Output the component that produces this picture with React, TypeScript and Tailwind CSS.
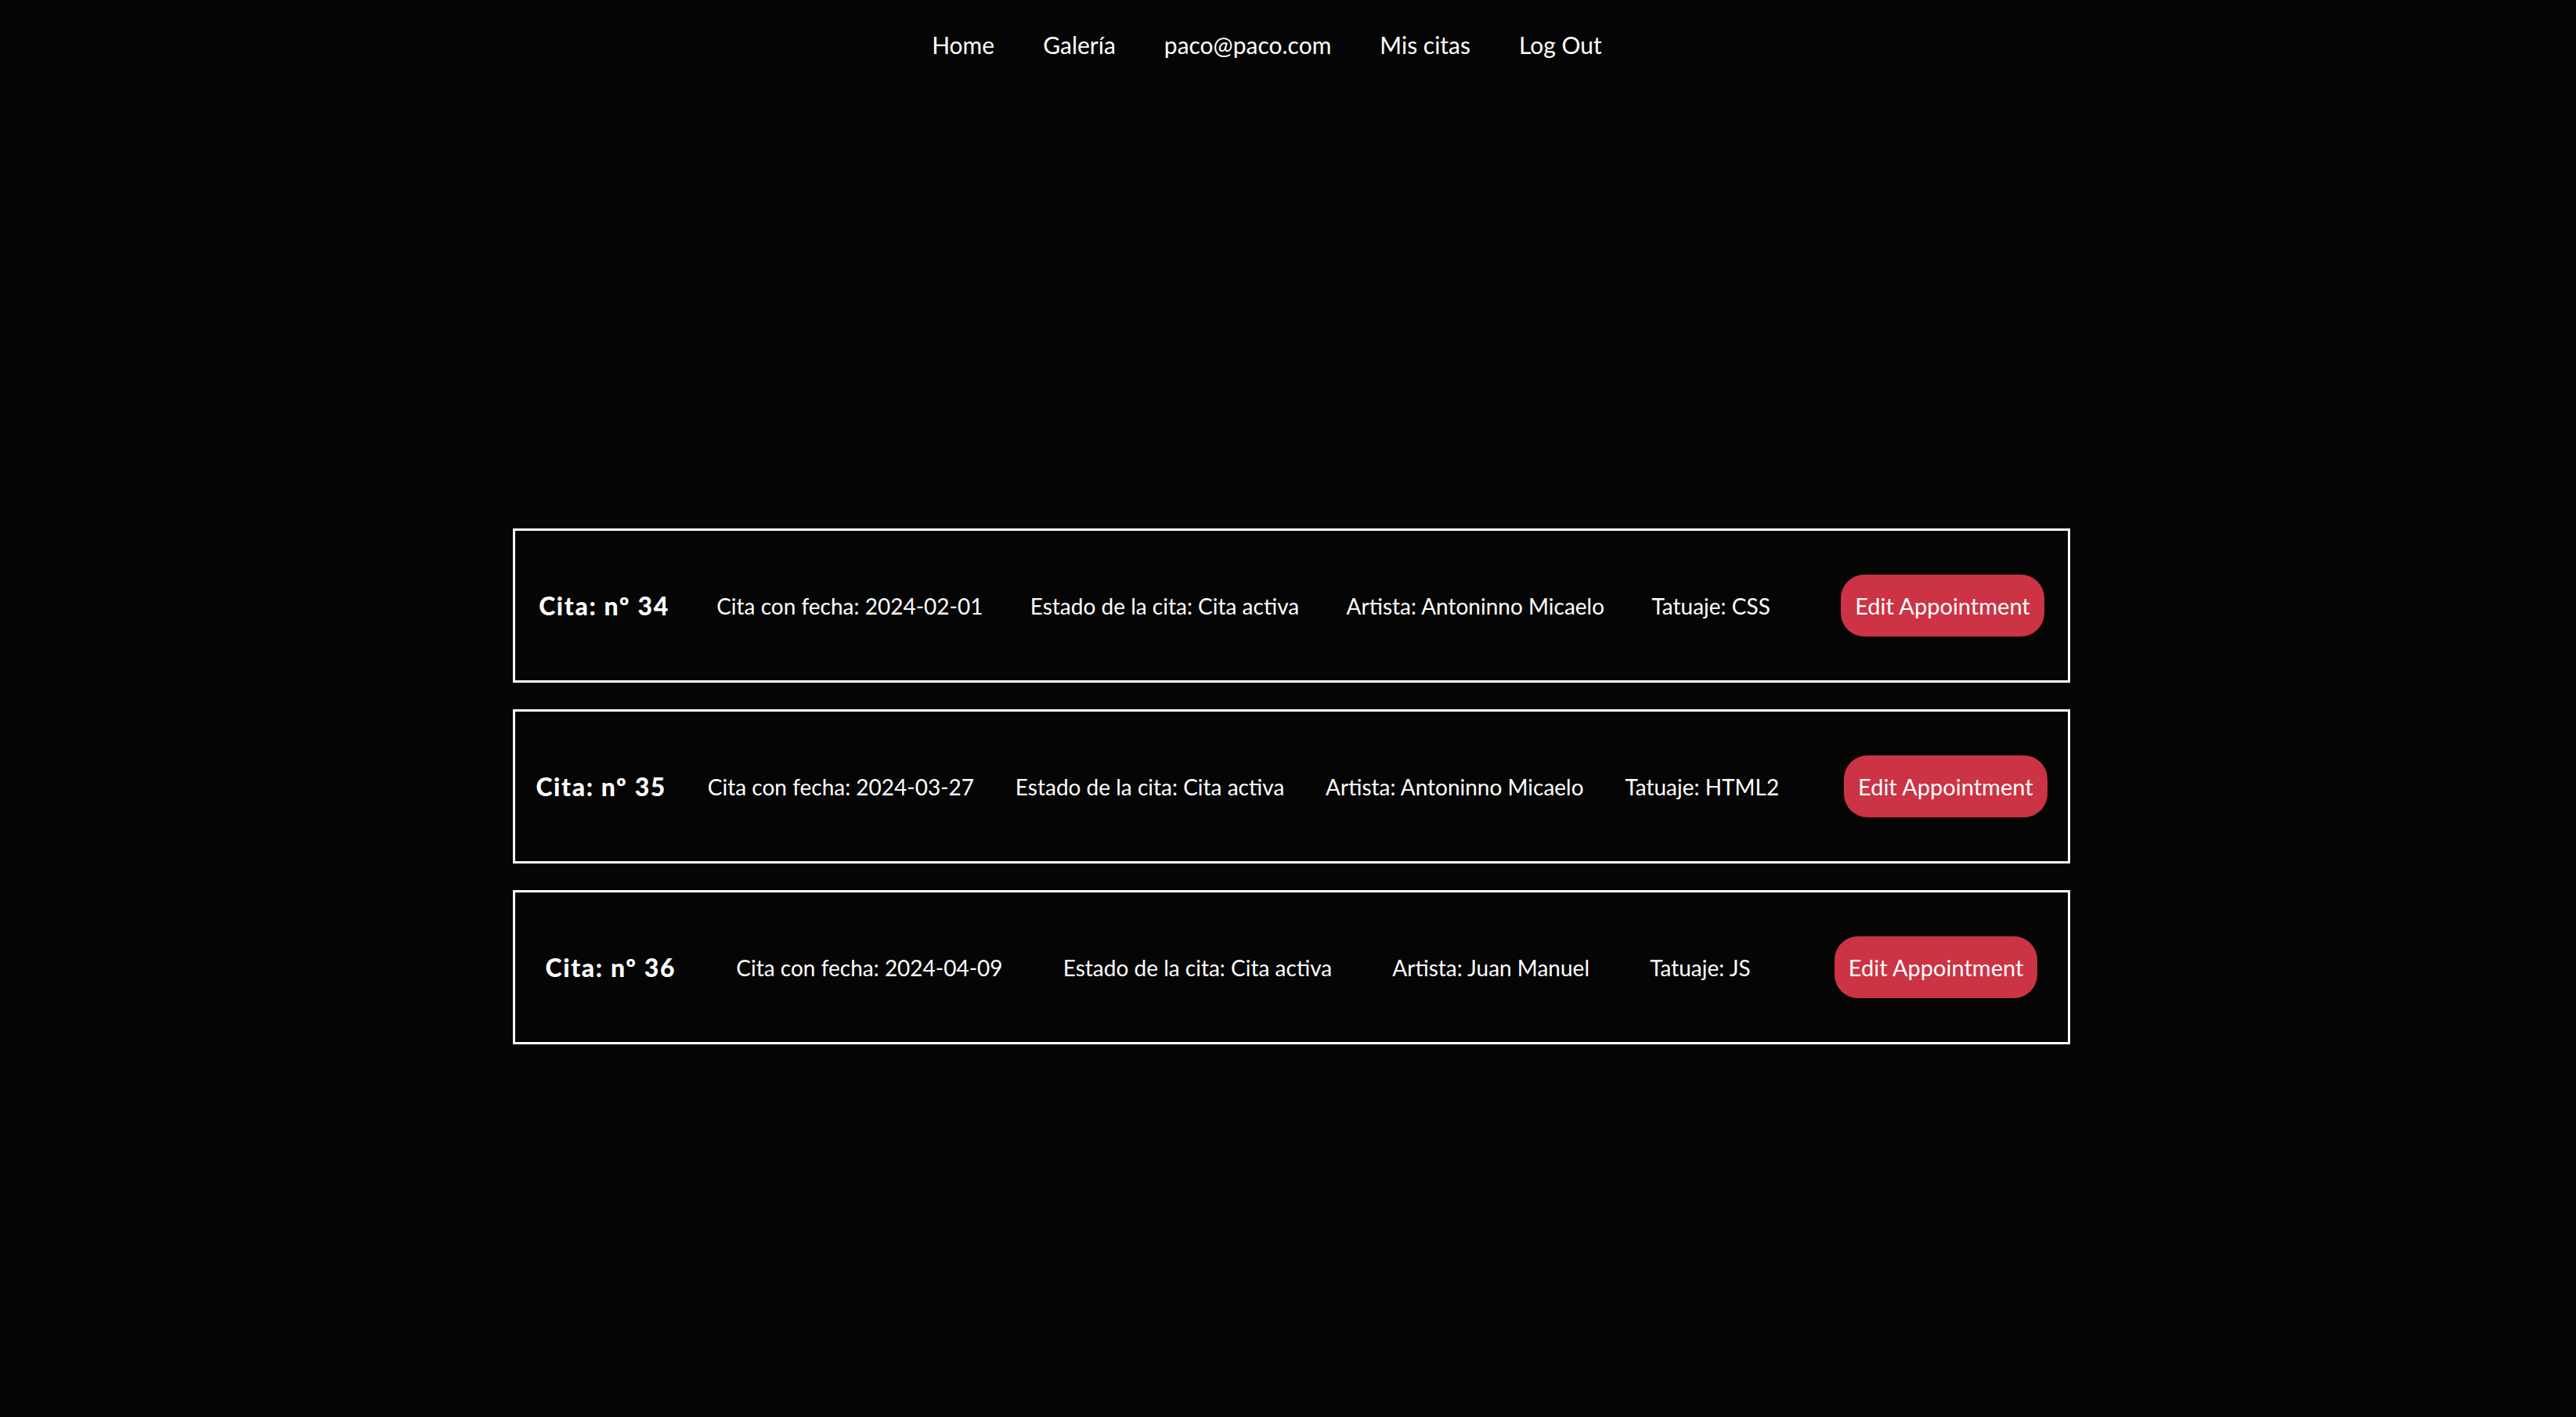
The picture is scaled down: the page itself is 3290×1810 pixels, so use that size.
const links = ["Home", "Galería", "paco@paco.com", "Mis citas", "Log Out"];

const citas = [
  { id: 34, fecha: "2024-02-01", estado: "Cita activa", artista: "Antoninno Micaelo", tatuaje: "CSS" },
  { id: 35, fecha: "2024-03-27", estado: "Cita activa", artista: "Antoninno Micaelo", tatuaje: "HTML2" },
  { id: 36, fecha: "2024-04-09", estado: "Cita activa", artista: "Juan Manuel", tatuaje: "JS" },
];

function Nav() {
  return (
    <nav className="flex justify-center pt-[36px] pb-[36px] pl-[8px]">
      {links.map((l) => (
        <a key={l} href="#" className="mr-[62px] text-[30px] leading-[42px] font-normal text-white">
          {l}
        </a>
      ))}
    </nav>
  );
}

function CitaCard({ cita }: { cita: (typeof citas)[number] }) {
  return (
    <div className="flex h-[197px] items-center justify-around border-[3px] border-white text-[28px] font-normal text-white">
      <span className="text-[32px] font-black tracking-[0.05em]">Cita: nº {cita.id}</span>
      <span>Cita con fecha: {cita.fecha}</span>
      <span>Estado de la cita: {cita.estado}</span>
      <span>Artista: {cita.artista}</span>
      <span>Tatuaje: {cita.tatuaje}</span>
      <button className="ml-[30px] h-[79px] rounded-[30px] bg-[#cc3344] px-[18px] text-[29px] font-normal text-white">
        Edit Appointment
      </button>
    </div>
  );
}

export default function App() {
  return (
    <div className="min-h-screen bg-[#050505] font-['Lato',sans-serif]">
      <Nav />
      <main className="ml-[655px] mt-[561px] flex w-[1989px] flex-col gap-[34px] pb-[100px]">
        {citas.map((c) => (
          <CitaCard key={c.id} cita={c} />
        ))}
      </main>
    </div>
  );
}
